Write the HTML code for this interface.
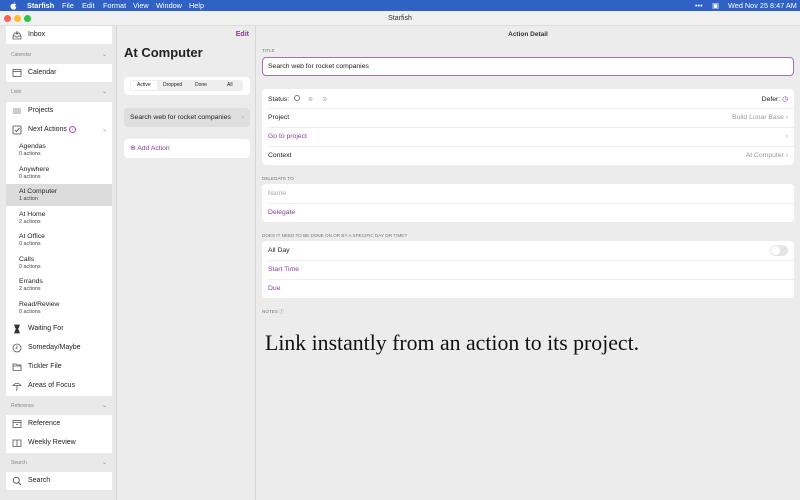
<!DOCTYPE html>
<html><head><style>
*{box-sizing:border-box;margin:0;padding:0}
body{width:800px;height:500px;overflow:hidden;font-family:"Liberation Sans",sans-serif;background:#ececec;position:relative;color:#222}
.a{position:absolute}
.menu{left:0;top:0;width:800px;height:11px;background:#2f62c4;color:#fff;font-size:7.3px;line-height:11px}
.menu span{position:absolute;top:0}
.tb{left:0;top:11px;width:800px;height:15px;background:#f0f0f0;border-bottom:1px solid #ddd;font-size:7px;line-height:15px;text-align:center;color:#333}
.dot{position:absolute;top:4px;width:7px;height:7px;border-radius:50%}
.side{left:0;top:26px;width:117px;height:474px;background:#e9e9e9;border-right:1px solid #d6d6d6}
.wb{position:absolute;left:6px;width:106px;background:#fff}
.it{position:absolute;left:28px;font-size:7px;color:#222}
.ic{position:absolute;left:12px;width:10px;height:10px}
.hd{position:absolute;left:11px;font-size:5px;color:#888}
.chev{position:absolute;left:102px;font-size:6px;color:#888}
.sub{position:absolute;left:19px;font-size:6.8px;line-height:7.5px}
.sub small{font-size:5.4px;color:#444;display:block}
.mid{left:118px;top:26px;width:138px;height:474px;background:#ececec;border-right:1px solid #d6d6d6}
.right{left:256px;top:26px;width:544px;height:474px;background:#ececec}
.card{position:absolute;left:6px;width:532px;background:#fff;border-radius:4px}
.row{position:absolute;left:6px;font-size:6.8px}
.pur{color:#8a3b9a}
.lbl{position:absolute;left:6px;font-size:4.6px;color:#777}
.line{position:absolute;left:6px;right:0;height:1px;background:#eee}
.gr{color:#999;position:absolute;font-size:6.8px}
</style></head><body>
<div class="a menu"><svg class="a" style="left:10px;top:2px" width="7" height="8" viewBox="0 0 7 8"><path d="M3.5 2C4.5 1.5 5.5 1.6 6 2.4 5 3 5 4.8 6.3 5.3 5.8 6.7 5 7.8 4.3 7.6 3.7 7.4 3.3 7.4 2.7 7.6 2 7.8.5 6 .5 4.3.5 2.5 2 1.6 3.5 2zM3.6 1.6C3.5.8 4.2.2 4.8.1 4.9.9 4.2 1.6 3.6 1.6z" fill="#fff"/></svg><span style="left:27px;font-weight:bold">Starfish</span><span style="left:62px">File</span><span style="left:82px">Edit</span><span style="left:103px">Format</span><span style="left:133px">View</span><span style="left:156px">Window</span><span style="left:189px">Help</span><span style="left:695px">•••</span><span style="left:712px">▣</span><span style="left:728px">Wed Nov 25  8:47 AM</span></div>
<div class="a tb">Starfish<div class="dot" style="left:4px;background:#fe5f57"></div><div class="dot" style="left:14px;background:#febc2e"></div><div class="dot" style="left:24px;background:#28c840"></div></div>
<div class="a side">
<div class="wb" style="top:0;height:18px"></div>
<svg class="ic" style="top:4px" viewBox="0 0 10 10" fill="none" stroke="#555" stroke-width=".8"><path d="M1 6h2.5l.8 1h1.4l.8-1H9v3H1zM1 6l1.5-3h5L9 6M5 1v3M3.8 3L5 4.2 6.2 3"/></svg>
<div class="it" style="top:5px">Inbox</div>
<div class="hd" style="top:26px">Calendar</div><div class="chev" style="top:25px">⌄</div>
<div class="wb" style="top:38px;height:18px"></div>
<svg class="ic" style="top:42px" viewBox="0 0 10 10" fill="none" stroke="#555" stroke-width=".8"><rect x="1" y="1.5" width="8" height="7"/><path d="M1 3.5h8"/></svg>
<div class="it" style="top:43px">Calendar</div>
<div class="hd" style="top:63px">Lists</div><div class="chev" style="top:62px">⌄</div>
<div class="wb" style="top:76px;height:294px"></div>
<div class="wb" style="top:158px;height:22px;background:#dcdcdc"></div>
<svg class="ic" style="top:80px" viewBox="0 0 10 10" stroke="#777" stroke-width=".8"><path d="M1 3h8M1 5h8M1 7h8"/></svg>
<div class="it" style="top:81px">Projects</div>
<svg class="ic" style="top:99px" viewBox="0 0 10 10" fill="none" stroke="#444" stroke-width=".8"><rect x="1" y="1" width="8" height="8" rx="1"/><path d="M3 5l1.5 1.5L7.5 3"/></svg>
<div class="it" style="top:100px">Next Actions <span style="color:#a050c0;border:0.8px solid #a050c0;border-radius:50%;font-size:4.5px;padding:0 1.4px">+</span></div><div class="chev" style="top:100px">⌄</div>
<div class="sub" style="top:117px">Agendas<small>0 actions</small></div>
<div class="sub" style="top:140px">Anywhere<small>0 actions</small></div>
<div class="sub" style="top:162px">At Computer<small>1 action</small></div>
<div class="sub" style="top:185px">At Home<small>2 actions</small></div>
<div class="sub" style="top:207px">At Office<small>0 actions</small></div>
<div class="sub" style="top:230px">Calls<small>0 actions</small></div>
<div class="sub" style="top:252px">Errands<small>2 actions</small></div>
<div class="sub" style="top:275px">Read/Review<small>0 actions</small></div>
<svg class="ic" style="top:298px" viewBox="0 0 10 10" fill="#333" stroke="#333" stroke-width=".8"><path d="M2 1h6M2 9h6M3 1.5Q3 4 5 5 3 6 3 8.5h4Q7 6 5 5 7 4 7 1.5z"/></svg><div class="it" style="top:299px">Waiting For</div>
<svg class="ic" style="top:317px" viewBox="0 0 10 10" fill="none" stroke="#555" stroke-width=".8"><circle cx="5" cy="5" r="4"/><path d="M5 2.5V5L3.5 6"/></svg><div class="it" style="top:318px">Someday/Maybe</div>
<svg class="ic" style="top:336px" viewBox="0 0 10 10" fill="none" stroke="#555" stroke-width=".8"><path d="M1 2h3l1 1h4v5.5H1z M1 4h8"/></svg><div class="it" style="top:337px">Tickler File</div>
<svg class="ic" style="top:355px" viewBox="0 0 10 10" fill="none" stroke="#555" stroke-width=".8"><path d="M1 4.5Q5 0 9 4.5zM5 4.5V8.5Q5 9.5 4 9"/></svg><div class="it" style="top:356px">Areas of Focus</div>
<div class="hd" style="top:377px">Reference</div><div class="chev" style="top:376px">⌄</div>
<div class="wb" style="top:389px;height:38px"></div>
<svg class="ic" style="top:393px" viewBox="0 0 10 10" fill="none" stroke="#555" stroke-width=".8"><rect x="1" y="1.5" width="8" height="7"/><path d="M1 3.5h8M4 5.5h2"/></svg><div class="it" style="top:394px">Reference</div>
<svg class="ic" style="top:412px" viewBox="0 0 10 10" fill="none" stroke="#555" stroke-width=".8"><path d="M1 2h3.5l.5.5.5-.5H9v6.5H1zM5 2.5v6"/></svg><div class="it" style="top:413px">Weekly Review</div>
<div class="hd" style="top:434px">Search</div><div class="chev" style="top:433px">⌄</div>
<div class="wb" style="top:446px;height:18px"></div>
<svg class="ic" style="top:450px" viewBox="0 0 10 10" fill="none" stroke="#555" stroke-width=".9"><circle cx="4.3" cy="4.3" r="3"/><path d="M6.5 6.5L9 9"/></svg><div class="it" style="top:451px">Search</div>
</div>
<div class="a mid">
<div class="a pur" style="right:6px;top:5px;font-size:7px;font-weight:bold">Edit</div>
<div class="a" style="left:6px;top:19px;font-size:13px;font-weight:bold">At Computer</div>
<div class="a" style="left:6px;top:51px;width:126px;height:18px;background:#fff;border-radius:4px"></div>
<div class="a" style="left:12px;top:54px;width:113px;height:11px;background:#eee;border-radius:3px;font-size:5px;line-height:11px">
<div class="a" style="left:1px;top:1px;width:26px;height:9px;background:#fff;border-radius:2px"></div>
<span class="a" style="left:7px">Active</span><span class="a" style="left:33px">Dropped</span><span class="a" style="left:65px">Done</span><span class="a" style="left:97px">All</span></div>
<div class="a" style="left:6px;top:82px;width:126px;height:19px;background:#dedede;border-radius:4px;font-size:6.8px;line-height:19px;padding-left:6px">Search web for rocket companies<span class="a" style="right:6px;color:#aaa">›</span></div>
<div class="a pur" style="left:6px;top:113px;width:126px;height:19px;background:#fff;border-radius:4px;font-size:6.8px;line-height:19px;padding-left:6px">⊕ Add Action</div>
</div>
<div class="a right">
<div class="a" style="left:0;width:544px;top:5px;text-align:center;font-size:6.5px;font-weight:bold;color:#333">Action Detail</div>
<div class="lbl" style="top:22px">TITLE</div>
<div class="card" style="top:31px;height:19px;border:1px solid #a670b4;font-size:6.8px;line-height:17px;padding-left:5px">Search web for rocket companies</div>
<div class="card" style="top:63px;height:76px">
<div class="row" style="top:6px">Status: <span style="display:inline-block;width:6px;height:6px;border:.8px solid #777;border-radius:50%;margin-left:3px"></span><span style="color:#aaa;margin-left:8px;font-size:6px">⊗</span><span style="color:#aaa;margin-left:9px;font-size:6px">⊘</span></div>
<div class="row" style="top:6px;left:auto;right:6px">Defer: <span class="pur">◷</span></div>
<div class="line" style="top:19px"></div>
<div class="row" style="top:25px">Project</div><div class="gr" style="top:25px;right:6px">Build Lunar Base ›</div>
<div class="line" style="top:38px"></div>
<div class="row pur" style="top:44px">Go to project</div><div class="gr" style="top:44px;right:6px">›</div>
<div class="line" style="top:57px"></div>
<div class="row" style="top:63px">Context</div><div class="gr" style="top:63px;right:6px">At Computer ›</div>
</div>
<div class="lbl" style="top:150px">DELEGATE TO</div>
<div class="card" style="top:158px;height:38px">
<div class="row" style="top:6px;color:#aaa">Name</div><div class="line" style="top:19px"></div>
<div class="row pur" style="top:25px">Delegate</div></div>
<div class="lbl" style="top:207px">DOES IT NEED TO BE DONE ON OR BY A SPECIFIC DAY OR TIME?</div>
<div class="card" style="top:215px;height:57px">
<div class="row" style="top:6px">All Day</div>
<div class="a" style="right:6px;top:4px;width:18px;height:11px;border-radius:6px;background:#e5e5e5"><div class="a" style="left:1px;top:1px;width:9px;height:9px;border-radius:50%;background:#fff"></div></div>
<div class="line" style="top:19px"></div>
<div class="row pur" style="top:25px">Start Time</div><div class="line" style="top:38px"></div>
<div class="row pur" style="top:44px">Due</div></div>
<div class="lbl" style="top:283px">NOTES ⓘ</div>
<div class="a" style="left:9px;top:305px;font-family:'Liberation Serif',serif;font-size:21.8px;color:#111">Link instantly from an action to its project.</div>
</div>
</body></html>
